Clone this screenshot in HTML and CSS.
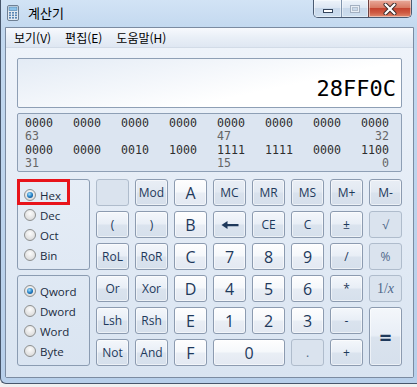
FILE: index.html
```html
<!DOCTYPE html>
<html lang="ko">
<head>
    <meta charset="UTF-8">
    <meta name="viewport" content="width=device-width, initial-scale=1.0">
    <title>계산기</title>
    <link rel="stylesheet" href="styles.css">
</head>
<body>
    <div class="window">
        <div class="titlebar">
            <svg class="app-icon" width="12" height="16" viewBox="0 0 12 16">
                <rect x="0.5" y="0.5" width="11" height="15" rx="1.5" fill="#e3e9f0" stroke="#6f8094"/>
                <rect x="2" y="2" width="8" height="3.5" fill="#8cc2ea" stroke="#4d7fa8" stroke-width="0.6"/>
                <g fill="#5a86b4">
                    <rect x="2" y="7" width="2" height="1.6"/><rect x="5" y="7" width="2" height="1.6"/><rect x="8" y="7" width="2" height="1.6"/>
                    <rect x="2" y="9.5" width="2" height="1.6"/><rect x="5" y="9.5" width="2" height="1.6"/><rect x="8" y="9.5" width="2" height="1.6"/>
                    <rect x="2" y="12" width="2" height="1.6"/><rect x="5" y="12" width="2" height="1.6"/><rect x="8" y="12" width="2" height="1.6"/>
                </g>
            </svg>
            <span class="title">계산기</span>
            <div class="caption">
                <div class="cap min"><span></span></div>
                <div class="cap max"><span></span></div>
                <div class="cap close">
                    <svg width="14" height="12" viewBox="0 0 14 12">
                        <path d="M2.5 1.5 L11.5 10.5 M11.5 1.5 L2.5 10.5" stroke="#3a2a2a" stroke-width="4" stroke-linecap="round"/>
                        <path d="M2.5 1.5 L11.5 10.5 M11.5 1.5 L2.5 10.5" stroke="#ffffff" stroke-width="2.2" stroke-linecap="round"/>
                    </svg>
                </div>
            </div>
        </div>

        <div class="client">
            <div class="menubar">
                <span>보기(V)</span>
                <span>편집(E)</span>
                <span>도움말(H)</span>
            </div>

            <div class="content">
                <div class="display">28FF0C</div>

                <div class="bits">
                    <span>0000</span><span>0000</span><span>0000</span><span>0000</span>
                    <span>0000</span><span>0000</span><span>0000</span><span>0000</span>
                    <span class="lbl">63</span><span></span><span></span><span></span>
                    <span class="lbl">47</span><span></span><span></span><span class="lbl end">32</span>
                    <span>0000</span><span>0000</span><span>0010</span><span>1000</span>
                    <span>1111</span><span>1111</span><span>0000</span><span>1100</span>
                    <span class="lbl">31</span><span></span><span></span><span></span>
                    <span class="lbl">15</span><span></span><span></span><span class="lbl end">0</span>
                </div>

                <div class="keys">
                    <div class="groups">
                        <div class="group">
                            <div class="radio on"><i></i>Hex</div>
                            <div class="radio"><i></i>Dec</div>
                            <div class="radio"><i></i>Oct</div>
                            <div class="radio"><i></i>Bin</div>
                            <div class="highlight"></div>
                        </div>
                        <div class="group">
                            <div class="radio on"><i></i>Qword</div>
                            <div class="radio"><i></i>Dword</div>
                            <div class="radio"><i></i>Word</div>
                            <div class="radio"><i></i>Byte</div>
                        </div>
                    </div>

                    <div class="pad">
                        <div class="key off"></div>
                        <div class="key mem">Mod</div>
                        <div class="key num">A</div>
                        <div class="key mem">MC</div>
                        <div class="key mem">MR</div>
                        <div class="key mem">MS</div>
                        <div class="key mem">M+</div>
                        <div class="key mem">M-</div>

                        <div class="key">(</div>
                        <div class="key">)</div>
                        <div class="key num">B</div>
                        <div class="key">
                            <svg width="18" height="10" viewBox="0 0 18 10">
                                <path d="M0.5 5 L6.5 1 L6.5 4 L17.5 4 L17.5 6.2 L6.5 6.2 L6.5 9 Z" fill="#1e395b"/>
                            </svg>
                        </div>
                        <div class="key">CE</div>
                        <div class="key">C</div>
                        <div class="key">±</div>
                        <div class="key off">√</div>

                        <div class="key">RoL</div>
                        <div class="key">RoR</div>
                        <div class="key num">C</div>
                        <div class="key num">7</div>
                        <div class="key num">8</div>
                        <div class="key num">9</div>
                        <div class="key">/</div>
                        <div class="key off">%</div>

                        <div class="key">Or</div>
                        <div class="key">Xor</div>
                        <div class="key num">D</div>
                        <div class="key num">4</div>
                        <div class="key num">5</div>
                        <div class="key num">6</div>
                        <div class="key">*</div>
                        <div class="key off recip">1/<em>x</em></div>

                        <div class="key">Lsh</div>
                        <div class="key">Rsh</div>
                        <div class="key num">E</div>
                        <div class="key num">1</div>
                        <div class="key num">2</div>
                        <div class="key num">3</div>
                        <div class="key">-</div>
                        <div class="key equals">=</div>

                        <div class="key">Not</div>
                        <div class="key">And</div>
                        <div class="key num">F</div>
                        <div class="key num wide">0</div>
                        <div class="key off">.</div>
                        <div class="key">+</div>
                    </div>
                </div>
            </div>
        </div>
    </div>
</body>
</html>
```

FILE: styles.css
```css
* {
    box-sizing: border-box;
}
body {
    margin: 0;
    background: #f0f0f0;
    font-family: "Open Sans", sans-serif;
}
.window {
    width: 417px;
    height: 384px;
    padding: 0 3px 5px 4px;
    border-left: 1px solid #47566b;
    border-bottom: 1px solid #47566b;
    border-bottom-left-radius: 6px;
    background: linear-gradient(#d2e3f5, #c2d8ef 30px, #b7cfea);
}

/* title bar */
.titlebar {
    height: 27px;
    margin: 0 -3px 0 -4px;
    display: flex;
    align-items: flex-start;
}
.app-icon {
    margin: 5px 0 0 6px;
}
.title {
    margin: 4px 0 0 9px;
    font: 13px/17px "Noto Sans CJK KR", sans-serif;
    color: #000;
}
.caption {
    margin-left: auto;
    margin-right: 5px;
    display: flex;
    height: 18px;
    border: 1px solid #4a5b72;
    border-top: 0;
    border-radius: 0 0 5px 5px;
    overflow: hidden;
}
.cap {
    display: flex;
    align-items: center;
    justify-content: center;
    box-shadow: inset 0 0 0 1px rgba(255, 255, 255, 0.45);
}
.cap.min,
.cap.max {
    width: 27px;
    background: linear-gradient(#edf3fa, #dde7f3 45%, #c8d8ea 50%, #cddeef);
}
.cap.max {
    border-left: 1px solid #8094ad;
}
.cap.min span {
    width: 10px;
    height: 4px;
    margin-top: 4px;
    border: 1px solid #34445b;
    background: #fff;
}
.cap.max span {
    width: 10px;
    height: 8px;
    border: 1px solid #a3b0c1;
    box-shadow: inset 0 0 0 1px #e8eef5, inset 0 0 0 2px #b4c0ce;
}
.cap.close {
    width: 43px;
    border-left: 1px solid #6e4040;
    background: linear-gradient(#e9aa9c, #d87a64 45%, #c5432f 50%, #cf5b43 75%, #e08a6e);
}

/* client area */
.client {
    height: 351px;
    border: 1px solid #7b8ba1;
    border-radius: 0 0 2px 2px;
    display: flex;
    flex-direction: column;
}
.menubar {
    height: 20px;
    padding-left: 1px;
    display: flex;
    align-items: center;
    background: linear-gradient(#f7f9fd, #e9eff7 50%, #dfe7f2);
    border-bottom: 1px solid #d2dbe7;
    font: 12px/18px "Noto Sans CJK KR", sans-serif;
    color: #000;
}
.menubar span {
    padding: 0 7px;
}
.content {
    flex: 1;
    padding: 10px 11px 0 11px;
    background: linear-gradient(#eef3fa, #d9e4f1);
}

.display {
    height: 50px;
    padding: 0 5px 7px;
    display: flex;
    justify-content: flex-end;
    align-items: flex-end;
    border: 1px solid #8e9fb5;
    border-radius: 2px;
    background: linear-gradient(168deg, #e3ebf5 0, #f4f7fb 40%, #ffffff 65%);
    font: 22px/22px "DejaVu Sans Mono", monospace;
    color: #000;
}

.bits {
    margin-top: 5px;
    padding: 3px 0 1px 7px;
    display: grid;
    grid-template-columns: repeat(8, 28px);
    column-gap: 20px;
    border: 1px solid #8e9fb5;
    border-radius: 2px;
    background: #dce5f1;
    font: 11.6px/13.33px "DejaVu Sans Mono", monospace;
    color: #2e2e2e;
}
.bits .lbl {
    color: #666;
}
.bits .end {
    text-align: right;
}

.keys {
    margin-top: 7px;
    display: flex;
    gap: 6px;
}
.groups {
    width: 73px;
    display: flex;
    flex-direction: column;
    gap: 5px;
}
.group {
    position: relative;
    height: 91px;
    padding-top: 5px;
    border: 1px solid #8b9cb2;
    border-radius: 3px;
}
.radio {
    height: 20px;
    padding-left: 6px;
    display: flex;
    align-items: center;
    font-size: 11.5px;
    color: #1b2b40;
}
.radio i {
    position: relative;
    width: 12px;
    height: 12px;
    margin-right: 4px;
    border: 1px solid #8e9090;
    border-radius: 50%;
    background: radial-gradient(circle at 50% 35%, #fcfcfc, #d2d2d2);
}
.radio.on i::after {
    content: "";
    position: absolute;
    left: 2px;
    top: 2px;
    width: 6px;
    height: 6px;
    border-radius: 50%;
    background: radial-gradient(circle at 40% 35%, #a4e2ff, #1c78c0 55%, #0b3c70);
}
.highlight {
    position: absolute;
    left: -1px;
    top: -1px;
    width: 53px;
    height: 26px;
    border: 3px solid #e8141b;
}

.pad {
    display: grid;
    grid-template-columns: repeat(8, 33px);
    grid-auto-rows: 27px;
    gap: 5px 6px;
}
.key {
    display: flex;
    align-items: center;
    justify-content: center;
    border: 1px solid #8c9bb0;
    border-radius: 3px;
    background: linear-gradient(#f4f7fb, #e8eef6 48%, #dae3ee 52%, #d6e0ec);
    box-shadow: inset 0 0 0 1px rgba(255, 255, 255, 0.55);
    font-size: 12px;
    color: #1e395b;
}
.key.mem {
    background: linear-gradient(#e9eef5, #e2e9f2 48%, #d9e2ed 52%, #d6dfeb);
}
.key.num {
    font-size: 16px;
    background: linear-gradient(#fefefe, #f5f8fb 48%, #e9eef5 52%, #e3e9f2);
}
.key.off {
    background: #dae3ee;
    border-color: #afbccc;
    box-shadow: none;
    color: #4f6789;
}
.key.recip {
    font: 14px "Liberation Serif", serif;
}
.key.equals {
    grid-row: span 2;
    font-size: 21px;
    font-weight: 700;
}
.key.wide {
    grid-column: span 2;
}
```
